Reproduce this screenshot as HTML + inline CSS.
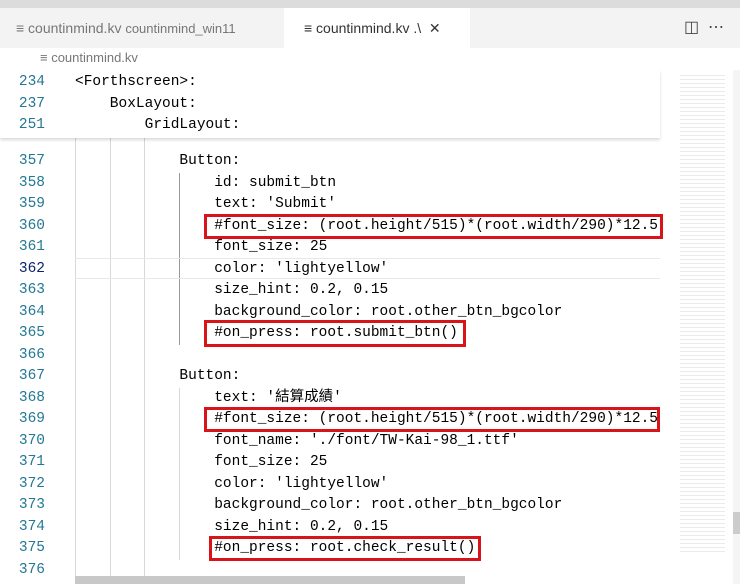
<!DOCTYPE html>
<html><head><meta charset="utf-8"><style>
body{margin:0;width:740px;height:584px;overflow:hidden;background:#fff;position:relative;font-family:"Liberation Mono","Noto Sans CJK TC",monospace;}
.top{position:absolute;left:0;top:0;width:740px;height:8px;background:#dcdcdc}
.tabs{position:absolute;left:0;top:8px;width:740px;height:40px;background:#f3f3f3}
.tab{position:absolute;top:0;height:40px;line-height:40px;font-family:"Liberation Sans",sans-serif;font-size:14px;color:#777}
.bc{position:absolute;left:40px;top:50px;font-family:"Liberation Sans",sans-serif;font-size:13px;color:#777}
.ln{position:absolute;left:0;width:45px;text-align:right;font-size:14.5px;color:#237893;line-height:21.5px}
.cd{position:absolute;font-size:14.5px;color:#000;line-height:21.5px;white-space:pre}
.g{position:absolute;width:1px;background:#d8d8d8}
.box{position:absolute;border:3px solid #d8141a;box-sizing:border-box}
.sticky{position:absolute;left:0;top:70px;width:660px;height:68px;background:#fff;box-shadow:0 2px 3px rgba(0,0,0,.15)}
.mm{position:absolute;left:680px;top:72px;width:45px;height:480px;background:repeating-linear-gradient(#fff 0 3px,#eaeaea 3px 4px)}
</style></head><body>
<div class="top"></div>
<div class="tabs">
<div class="tab" style="left:16px">≡ countinmind.kv <span style="font-size:13px">countinmind_win11</span></div>
<div class="tab" style="left:284px;width:186px;background:#fff;color:#333;padding-left:20px;box-sizing:border-box">≡ countinmind.kv .\ &nbsp;✕</div>
<div class="tab" style="left:684px;color:#444;font-size:16px">◫ &nbsp;⋯</div>
</div>
<div class="bc">≡ countinmind.kv</div>
<div class="mm"></div>
<div style="position:absolute;left:733px;top:70px;width:7px;height:514px;background:#f5f5f5"></div>
<div style="position:absolute;left:733px;top:512px;width:7px;height:22px;background:#ccc"></div>
<div class="g" style="left:75px;top:138px;height:440px"></div>
<div class="g" style="left:110px;top:138px;height:440px"></div>
<div class="g" style="left:144px;top:138px;height:440px"></div>
<div class="g" style="left:179px;top:173px;height:172px;background:#999"></div>
<div class="g" style="left:179px;top:388px;height:172px"></div>
<div style="position:absolute;left:75px;top:258px;width:585px;height:21px;border-top:1px solid #e8e8e8;border-bottom:1px solid #e8e8e8;box-sizing:border-box"></div>
<div class="ln" style="top:151px">357<br>358<br>359<br>360<br>361<br><span style="color:#0b216f">362</span><br>363<br>364<br>365<br>366<br>367<br>368<br>369<br>370<br>371<br>372<br>373<br>374<br>375<br>376</div>
<div class="cd" style="left:75px;top:151px">            Button:
                id: submit_btn
                text: 'Submit'
                #font_size: (root.height/515)*(root.width/290)*12.5
                font_size: 25
                color: 'lightyellow'
                size_hint: 0.2, 0.15
                background_color: root.other_btn_bgcolor
                #on_press: root.submit_btn()

            Button:
                text: '結算成績'
                #font_size: (root.height/515)*(root.width/290)*12.5
                font_name: './font/TW-Kai-98_1.ttf'
                font_size: 25
                color: 'lightyellow'
                background_color: root.other_btn_bgcolor
                size_hint: 0.2, 0.15
                #on_press: root.check_result()
</div>
<div style="position:absolute;left:660px;top:138px;width:8px;height:446px;background:#fff"></div>
<div class="sticky">
<div class="ln" style="top:2px">234<br>237<br>251</div>
<div class="cd" style="left:75px;top:2px">&lt;Forthscreen&gt;:
    BoxLayout:
        GridLayout:</div>
</div>
<div class="box" style="left:204px;top:214px;width:459px;height:25px"></div>
<div class="box" style="left:204px;top:320px;width:262px;height:27px"></div>
<div class="box" style="left:204px;top:407px;width:456px;height:25px"></div>
<div class="box" style="left:209px;top:536px;width:272px;height:25px"></div>
<div style="position:absolute;left:75px;top:576px;width:390px;height:8px;background:#c8c8c8"></div>
</body></html>
